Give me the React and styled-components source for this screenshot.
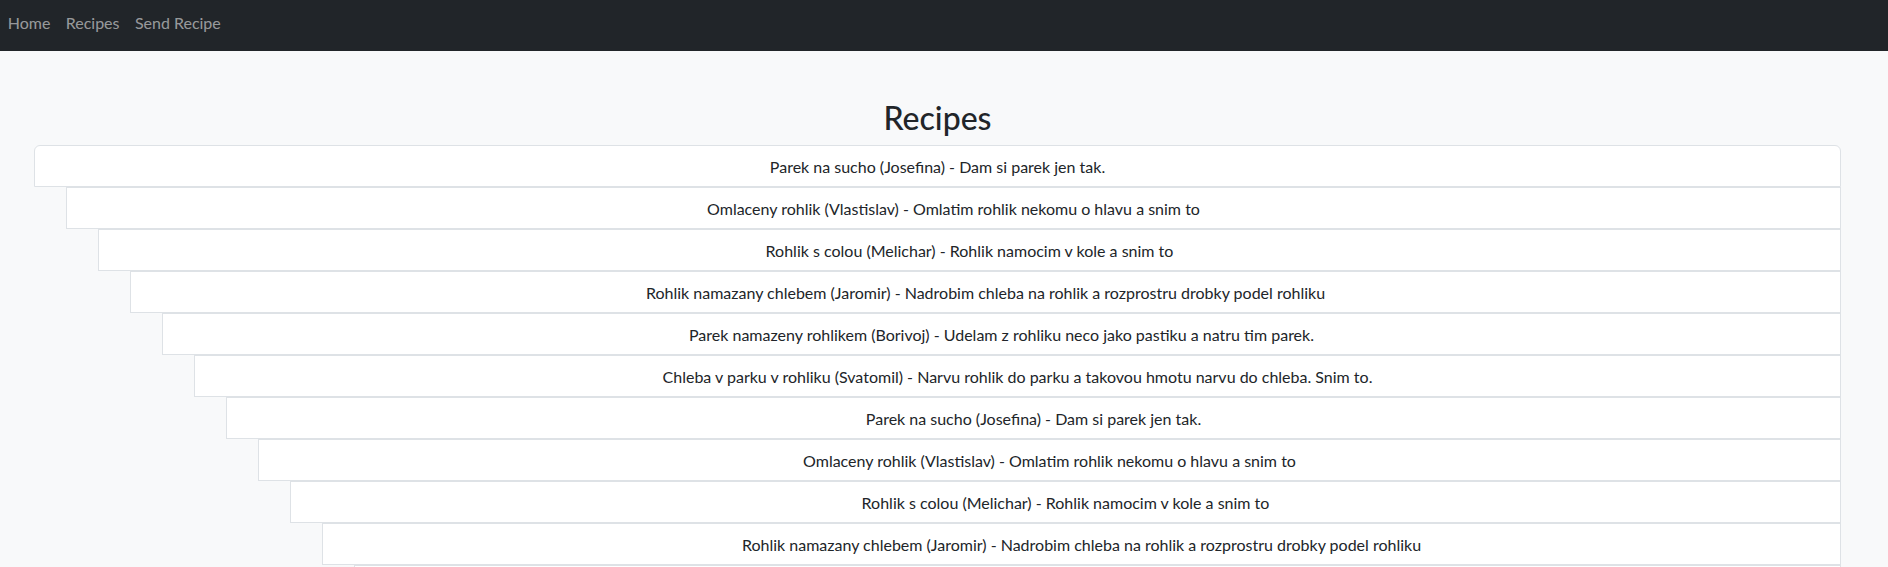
import React from "react";
import styled, { createGlobalStyle } from "styled-components";

const GlobalStyle = createGlobalStyle`
  html, body {
    margin: 0;
    padding: 0;
    overflow: hidden;
    background: #f8f9fa;
    font-family: Lato, "Liberation Sans", sans-serif;
    color: #212529;
  }
  * { box-sizing: border-box; }
`;

const Navbar = styled.nav`
  display: flex;
  align-items: flex-start;
  height: 51px;
  padding-top: 11px;
  background: #212529;
`;

const NavLink = styled.a`
  display: block;
  padding: 0 7.7px;
  font-size: 16px;
  line-height: 24px;
  color: rgba(255, 255, 255, 0.55);
  text-decoration: none;
  cursor: pointer;
`;

const Main = styled.main`
  padding: 48px 47px 0 34px;
`;

const Title = styled.h2`
  margin: 0 0 8px;
  text-align: center;
  font-size: 32px;
  font-weight: 500;
  line-height: 38.4px;
`;

const List = styled.ul`
  display: flex;
  flex-direction: column;
  margin: 0;
  padding: 0;
  list-style: none;
`;

const Item = styled.li`
  margin-left: ${(p) => p.$indent * 32}px;
  padding: 9px 16px 7px;
  font-size: 16px;
  line-height: 24px;
  text-align: center;
  background: #fff;
  border: 1px solid #dee2e6;
  border-radius: ${(p) => (p.$first ? "6px 6px 0 0" : "0")};
`;

const recipes = [
  "Parek na sucho (Josefina) - Dam si parek jen tak.",
  "Omlaceny rohlik (Vlastislav) - Omlatim rohlik nekomu o hlavu a snim to",
  "Rohlik s colou (Melichar) - Rohlik namocim v kole a snim to",
  "Rohlik namazany chlebem (Jaromir) - Nadrobim chleba na rohlik a rozprostru drobky podel rohliku",
  "Parek namazeny rohlikem (Borivoj) - Udelam z rohliku neco jako pastiku a natru tim parek.",
  "Chleba v parku v rohliku (Svatomil) - Narvu rohlik do parku a takovou hmotu narvu do chleba. Snim to.",
];

const items = [...recipes, ...recipes];

export default function App() {
  return (
    <>
      <GlobalStyle />
      <Navbar>
        <NavLink>Home</NavLink>
        <NavLink>Recipes</NavLink>
        <NavLink>Send Recipe</NavLink>
      </Navbar>
      <Main>
        <Title>Recipes</Title>
        <List>
          {items.map((text, i) => (
            <Item key={i} $indent={i} $first={i === 0}>
              {text}
            </Item>
          ))}
        </List>
      </Main>
    </>
  );
}
